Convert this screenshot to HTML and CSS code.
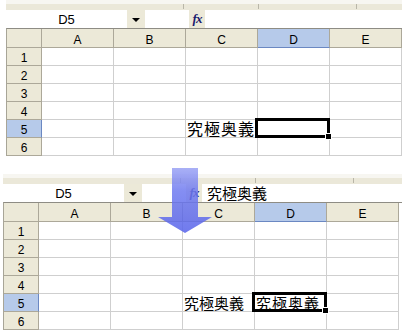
FILE: index.html
```html
<!DOCTYPE html>
<html lang="ja">
<head>
    <meta charset="UTF-8" />
    <title>Excel 入力</title>
    <link rel="stylesheet" href="styles.css">
</head>
<body>
    <!-- before: D5 is selected, empty -->
    <div class="panel panel_top">
        <div class="strip"></div>
        <div class="fbar">
            <div class="namebox">D5</div>
            <div class="drop"></div>
            <div class="gap"></div>
            <div class="fx"><i>f</i>x</div>
            <div class="input"></div>
        </div>
        <div class="sheet">
            <div class="hd corner"></div>
            <div class="hd">A</div>
            <div class="hd">B</div>
            <div class="hd">C</div>
            <div class="hd col_sel">D</div>
            <div class="hd">E</div>

            <div class="rh">1</div><div class="c"></div><div class="c"></div><div class="c"></div><div class="c"></div><div class="c"></div>
            <div class="rh">2</div><div class="c"></div><div class="c"></div><div class="c"></div><div class="c"></div><div class="c"></div>
            <div class="rh">3</div><div class="c"></div><div class="c"></div><div class="c"></div><div class="c"></div><div class="c"></div>
            <div class="rh">4</div><div class="c"></div><div class="c"></div><div class="c"></div><div class="c"></div><div class="c"></div>
            <div class="rh row_sel">5</div><div class="c"></div><div class="c"></div>
            <div class="c jp">究極奥義</div>
            <div class="c active"><span class="cursor"><span class="handle"></span></span></div>
            <div class="c"></div>
            <div class="rh">6</div><div class="c"></div><div class="c"></div><div class="c"></div><div class="c"></div><div class="c"></div>
        </div>
    </div>

    <!-- after: value pasted into D5 -->
    <div class="panel panel_bottom">
        <div class="strip"></div>
        <div class="fbar">
            <div class="namebox">D5</div>
            <div class="drop"></div>
            <div class="gap"></div>
            <div class="fx"><i>f</i>x</div>
            <div class="input jp_small">究極奥義</div>
        </div>
        <div class="sheet">
            <div class="hd corner"></div>
            <div class="hd">A</div>
            <div class="hd">B</div>
            <div class="hd">C</div>
            <div class="hd col_sel">D</div>
            <div class="hd">E</div>

            <div class="rh">1</div><div class="c"></div><div class="c"></div><div class="c"></div><div class="c"></div><div class="c"></div>
            <div class="rh">2</div><div class="c"></div><div class="c"></div><div class="c"></div><div class="c"></div><div class="c"></div>
            <div class="rh">3</div><div class="c"></div><div class="c"></div><div class="c"></div><div class="c"></div><div class="c"></div>
            <div class="rh">4</div><div class="c"></div><div class="c"></div><div class="c"></div><div class="c"></div><div class="c"></div>
            <div class="rh row_sel">5</div><div class="c"></div><div class="c"></div>
            <div class="c jp jp_small">究極奥義</div>
            <div class="c jp jp_edit active">究極奥義<span class="cursor"><span class="handle"></span></span></div>
            <div class="c"></div>
            <div class="rh">6</div><div class="c"></div><div class="c"></div><div class="c"></div><div class="c"></div><div class="c"></div>
        </div>
    </div>

    <svg class="arrow" width="60" height="70" viewBox="0 0 60 70">
        <defs>
            <linearGradient id="arrow_fill" x1="0" y1="0" x2="0" y2="1">
                <stop offset="0" stop-color="#9aa2f4" />
                <stop offset="0.35" stop-color="#6f7af0" />
                <stop offset="1" stop-color="#5763ea" />
            </linearGradient>
        </defs>
        <polygon points="16,2 42,2 42,51 56,51 29,67 2,51 16,51" fill="url(#arrow_fill)" fill-opacity="0.85" />
    </svg>
</body>
</html>
```

FILE: styles.css
```css
body {
    margin: 0;
    width: 402px;
    height: 336px;
    overflow: hidden;
    position: relative;
    background: #fff;
    font-family: "Liberation Sans", Arial, sans-serif;
    font-size: 12px;
    color: #000;
}

.panel_top {
    margin-left: 6px;
}

.panel_bottom {
    margin-left: 3px;
    margin-top: 18px;
}

/* toolbar edge left over from the crop */
.strip {
    height: 10px;
    background:
        linear-gradient(#b9b6a8, #b9b6a8) 177px 4px / 1px 5px no-repeat,
        linear-gradient(#b9b6a8, #b9b6a8) 252px 4px / 1px 5px no-repeat,
        linear-gradient(#b9b6a8, #b9b6a8) 350px 4px / 1px 5px no-repeat,
        linear-gradient(#f7f6f1 0 4px, #ebe8d9 4px);
}

.fbar {
    display: flex;
    height: 18px;
    background: #fff;
}

.namebox {
    width: 121px;
    text-align: center;
    padding-top: 2px;
    line-height: 16px;
    font-size: 13px;
    box-sizing: border-box;
}

.drop {
    width: 18px;
    background: #ece9d8;
    display: flex;
    align-items: center;
    justify-content: center;
}

.drop::before {
    content: "";
    border-left: 4px solid transparent;
    border-right: 4px solid transparent;
    border-top: 4px solid #000;
    margin-top: 2px;
}

.gap {
    width: 44px;
}

.fx {
    width: 16px;
    background: #ece9d8;
    font-family: "Liberation Serif", serif;
    font-style: italic;
    font-weight: bold;
    font-size: 13px;
    color: #1b1b6e;
    text-align: center;
    line-height: 18px;
    letter-spacing: -1px;
}

.input {
    flex: 1;
    padding-left: 5px;
    line-height: 18px;
}

.jp {
    font-family: "Noto Sans CJK JP", sans-serif;
    font-size: 16px;
    letter-spacing: 1px;
}

.jp_small {
    font-family: "Noto Sans CJK JP", sans-serif;
    font-size: 15px;
    letter-spacing: 0;
}

.jp_edit {
    font-size: 15px;
    letter-spacing: 1px;
}

.sheet {
    display: grid;
    grid-template-columns: 35px repeat(5, 72px);
    grid-template-rows: 19px repeat(6, 18px);
    border-top: 1px solid #8e8c84;
    border-left: 1px solid #a8a597;
}

.hd,
.rh {
    box-sizing: border-box;
    background: #ece9d8;
    border-right: 1px solid #aca899;
    border-bottom: 1px solid #aca899;
    text-align: center;
    padding-top: 3px;
    line-height: 16px;
}

.rh {
    padding-top: 2px;
}

.col_sel {
    background: #b6caea;
    border-bottom-color: #6b88c2;
}

.row_sel {
    background: #b6caea;
    border-right-color: #6b88c2;
}

.c {
    box-sizing: border-box;
    border-right: 1px solid #cfcfcf;
    border-bottom: 1px solid #cfcfcf;
    line-height: 17px;
    white-space: nowrap;
}

.c.jp {
    padding-left: 1px;
}

.active {
    position: relative;
}

.cursor {
    position: absolute;
    left: -3px;
    top: -2px;
    right: -1px;
    bottom: -1px;
    border: 3px solid #000;
}

.handle {
    position: absolute;
    right: -5px;
    bottom: -5px;
    width: 5px;
    height: 5px;
    background: #000;
    border: 1px solid #fff;
}

.arrow {
    position: absolute;
    left: 156px;
    top: 166px;
}
```
